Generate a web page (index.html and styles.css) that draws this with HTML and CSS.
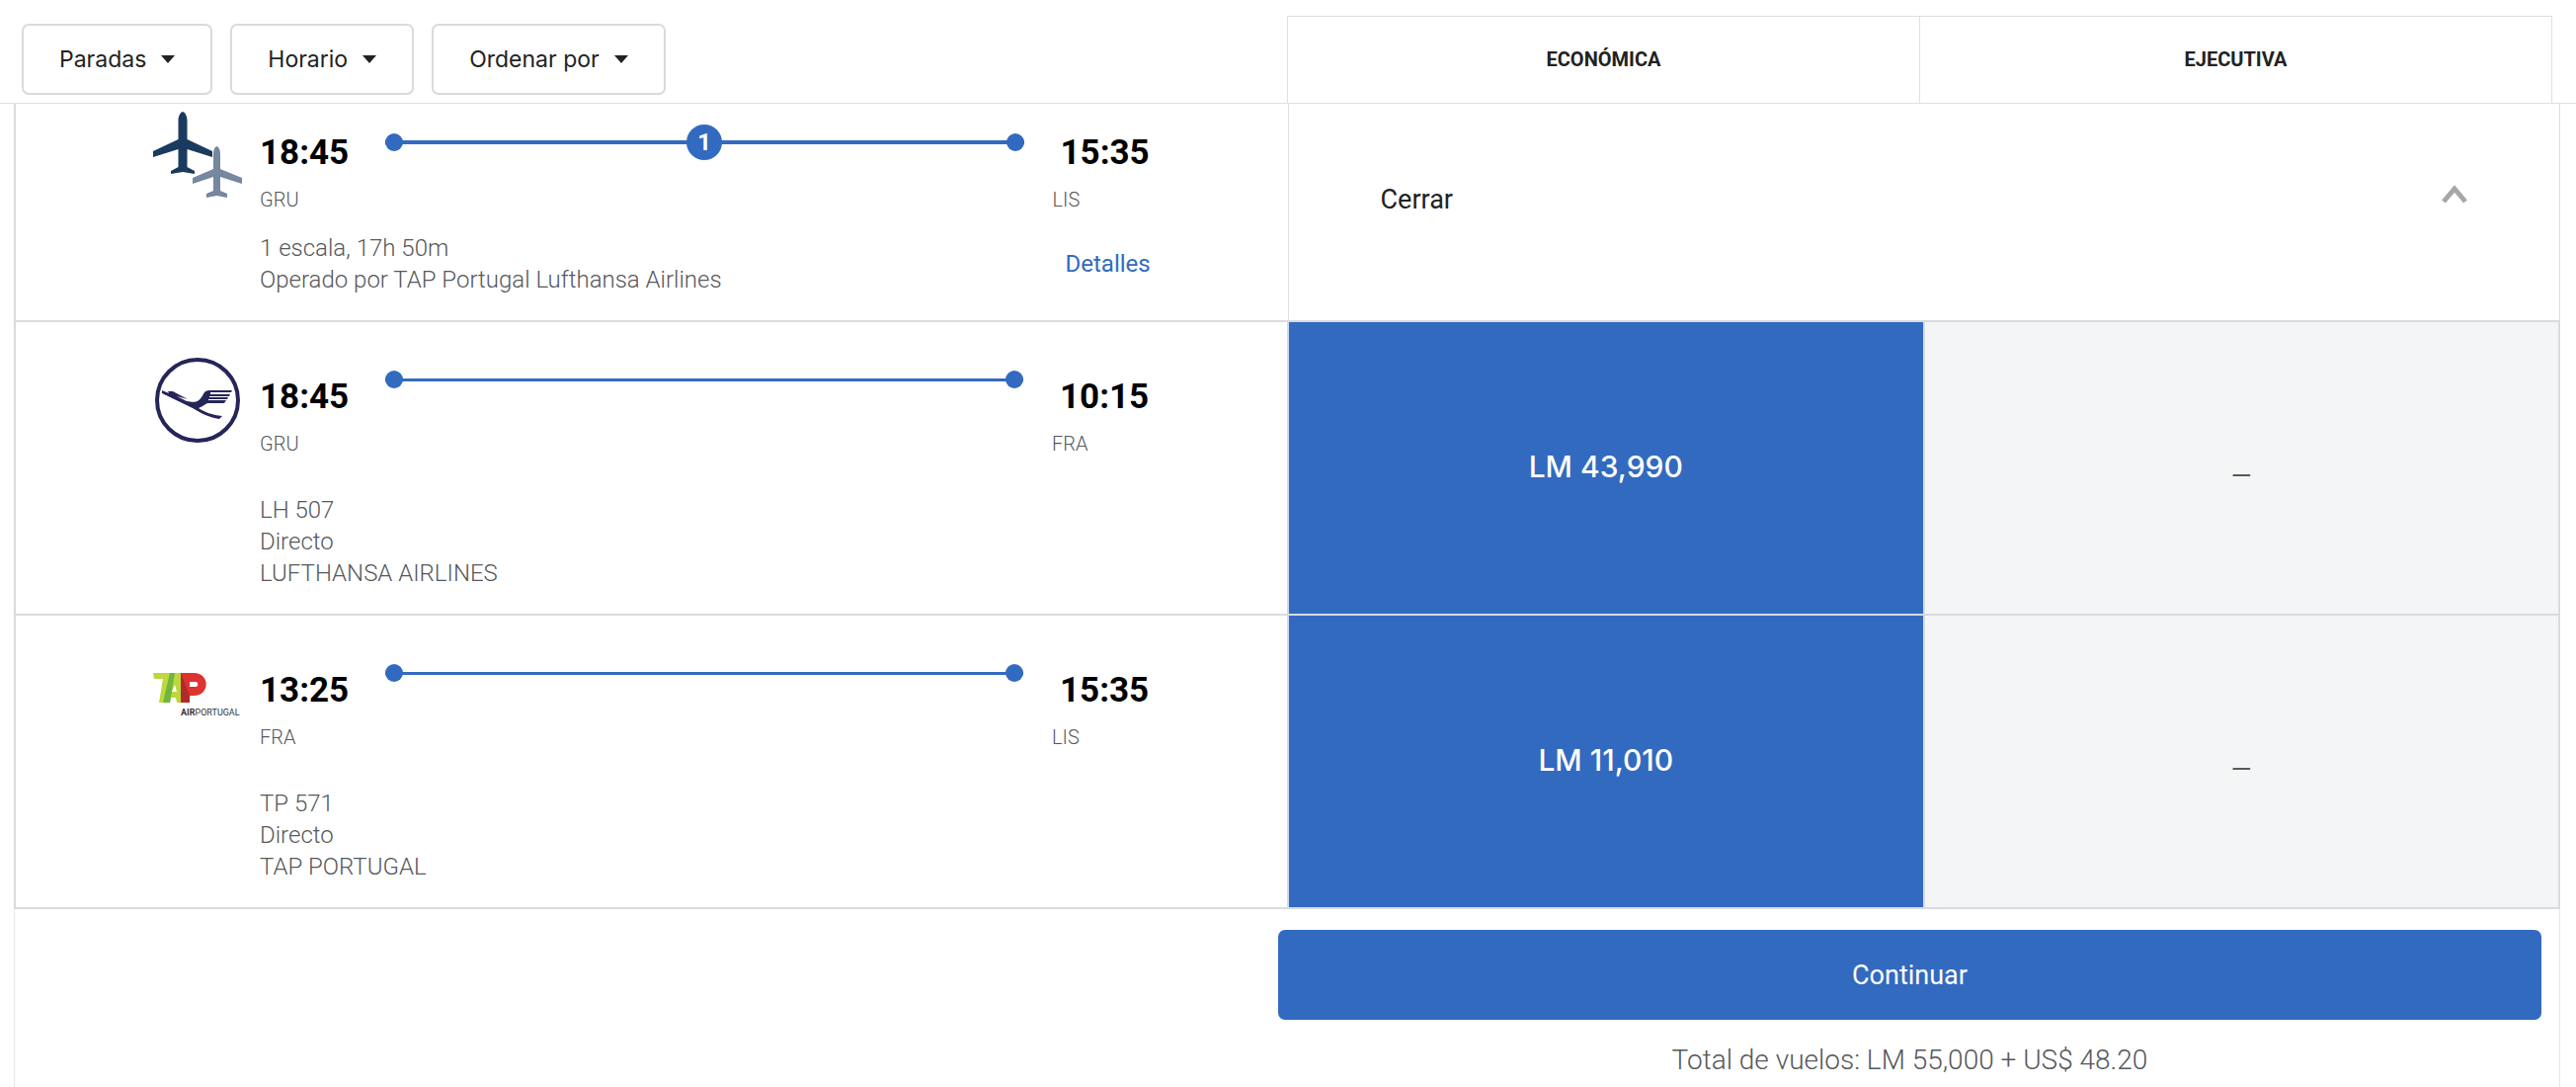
FILE: index.html
```html
<!DOCTYPE html>
<html lang="es">
<head>
    <meta charset="UTF-8">
    <title>Vuelos</title>
    <link rel="stylesheet" href="styles.css">
</head>
<body>
<header class="topbar">
    <div class="filters">
        <button type="button" class="filter">Paradas <span class="caret"></span></button>
        <button type="button" class="filter">Horario <span class="caret"></span></button>
        <button type="button" class="filter">Ordenar por <span class="caret"></span></button>
    </div>
    <div class="cabins">
        <div class="cabin">ECONÓMICA</div>
        <div class="cabin">EJECUTIVA</div>
    </div>
</header>

<main class="flights">
    <section class="flight flight-summary">
        <div class="flight-info">
            <svg class="logo" viewBox="0 0 90 90">
                <path fill="#1b3a5f" d="M30 0C33 1 34.500 5 34.500 9V28L60 40V46L34.500 38V56L42 60V63L30 61L18 63V60L25.500 56V38L0 46V40L25.500 28V9C25.500 5 27 1 30 0Z"/>
                <path fill="#76879f" d="M64.500 35C67 36 68 39 68 43V58L90 67V73L68 66V80L75 83V87L64.500 85L54 87V83L61 80V66L40 73V67L61 58V43C61 39 62 36 64.500 35Z"/>
            </svg>
            <div class="route">
                <div class="stop">
                    <div class="time">18:45</div>
                    <div class="airport">GRU</div>
                </div>
                <div class="line"><span class="stops">1</span></div>
                <div class="stop arrival">
                    <div class="time">15:35</div>
                    <div class="airport">LIS</div>
                </div>
                <div class="details">
                    1 escala, 17h 50m<br>
                    Operado por TAP Portugal Lufthansa Airlines
                </div>
                <a class="more" href="#">Detalles</a>
            </div>
        </div>
        <button type="button" class="close">
            Cerrar
            <svg class="chevron" viewBox="0 0 26 20"><path d="M2 17L13 4L24 17" fill="none" stroke="#a7a7a7" stroke-width="5"/></svg>
        </button>
    </section>

    <section class="flight">
        <div class="flight-info">
            <svg class="logo" viewBox="0 0 90 90">
                <circle cx="45" cy="45" r="41" fill="none" stroke="#262559" stroke-width="4"/>
                <path fill="#262559" d="M9 35L16 38L15 36L20 36L35 44L24 41L34 46C44 48 46 46 49 42L52 37C53 36 54 35 57 35H80L79 37L58 37V39H78L77 41L57 41V42H76L75 44L56 44V45H74L72 48L55 48C51 50 49 52 46 53C52 57 60 60 70 61L67 64C56 62 48 58 40 53L9 38Z"/>
            </svg>
            <div class="route">
                <div class="stop">
                    <div class="time">18:45</div>
                    <div class="airport">GRU</div>
                </div>
                <div class="line"></div>
                <div class="stop arrival">
                    <div class="time">10:15</div>
                    <div class="airport">FRA</div>
                </div>
                <div class="details">
                    LH 507<br>
                    Directo<br>
                    LUFTHANSA AIRLINES
                </div>
            </div>
        </div>
        <button type="button" class="fare fare-selected">LM 43,990</button>
        <div class="fare fare-empty">_</div>
    </section>

    <section class="flight">
        <div class="flight-info">
            <svg class="logo" viewBox="0 0 90 90">
                <path fill="#bdd73c" d="M0 24H28V54H24L23 49H18L17 54H6L10 30H1Z"/>
                <path fill="#6fb53f" d="M17 24H22L17 54H10Z"/>
                <path fill="#fff" d="M22 36L24 43H19Z"/>
                <path fill="#dc3430" d="M28 24H41C58 24 58 47 41 47H37V54H28Z"/>
                <path fill="#b02a27" d="M28 24L37 47V54H28Z"/>
                <path fill="#fff" d="M37 33H43C46 33 46 38 43 38H37Z"/>
                <text class="tap-text" x="28" y="67"><tspan class="tap-bold">AIR</tspan>PORTUGAL</text>
            </svg>
            <div class="route">
                <div class="stop">
                    <div class="time">13:25</div>
                    <div class="airport">FRA</div>
                </div>
                <div class="line"></div>
                <div class="stop arrival">
                    <div class="time">15:35</div>
                    <div class="airport">LIS</div>
                </div>
                <div class="details">
                    TP 571<br>
                    Directo<br>
                    TAP PORTUGAL
                </div>
            </div>
        </div>
        <button type="button" class="fare fare-selected">LM 11,010</button>
        <div class="fare fare-empty">_</div>
    </section>

    <div class="summary">
        <div class="summary-box">
            <button type="button" class="continue">Continuar</button>
            <p class="total">Total de vuelos: LM 55,000 + US$ 48.20</p>
        </div>
    </div>
</main>
</body>
</html>
```
FILE: styles.css
```css
* {
    box-sizing: border-box;
}
body {
    margin: 0;
    min-height: 100vh;
    display: flex;
    flex-direction: column;
    font-family: Roboto, "Liberation Sans", sans-serif;
    font-size: 24px;
    line-height: 32px;
    color: #56585b;
    background-color: #fff;
}
button {
    font: inherit;
    cursor: pointer;
}

/* filters and cabin names */
.topbar {
    display: flex;
    justify-content: space-between;
    height: 105px;
    padding: 16px 24px 0 22px;
    border-bottom: 1px solid #e0e0e0;
}
.filters {
    display: flex;
    gap: 18px;
    padding-top: 8px;
}
.filter {
    display: flex;
    align-items: center;
    gap: 15px;
    height: 72px;
    padding: 0 36px;
    border: 2px solid #dadada;
    border-radius: 7px;
    background-color: #fff;
    font-family: Inter, "Liberation Sans", sans-serif;
    font-size: 23px;
    color: #222;
}
.caret {
    border: 7px solid transparent;
    border-top: 8px solid #222;
    border-bottom: 0;
}
.cabins {
    display: flex;
    width: 50%;
}
.cabin {
    flex: 1;
    height: 88px;
    border: 1px solid #e0e0e0;
    border-bottom: 0;
    font-size: 20px;
    font-weight: bold;
    line-height: 86px;
    text-align: center;
    color: #222;
}
.cabin + .cabin {
    height: 90px;
    border-left: 0;
    border-bottom: 2px solid #e0e0e0;
}

/* flight rows */
.flights {
    flex: 1;
    display: flex;
    flex-direction: column;
    margin: 0 16px 0 14px;
}
.flight {
    display: grid;
    grid-template-columns: 2fr 1fr 1fr;
    min-height: 297px;
    border: 2px solid #dadbdc;
    border-top: 0;
}
.flight-info {
    display: flex;
    gap: 18px;
    padding: 34px 0 0 139px;
}
.logo {
    width: 90px;
    height: 90px;
}
.route {
    flex: 1;
    display: grid;
    grid-template-columns: 127px 1fr 267px;
    align-content: start;
}
.time {
    padding-top: 22px;
    font-size: 35px;
    font-weight: bold;
    line-height: 40px;
    color: #000;
}
.airport {
    padding-top: 11px;
    font-size: 20px;
}
.arrival {
    padding-left: 29px;
}
.arrival .time {
    padding-left: 8px;
}
.line {
    display: flex;
    align-items: center;
    justify-content: space-between;
    height: 18px;
    margin-top: 15px;
    background: linear-gradient(#326ac0, #326ac0) center / 100% 3px no-repeat;
}
.line::before,
.line::after {
    content: "";
    width: 18px;
    height: 18px;
    border-radius: 50%;
    background-color: #326ac0;
}
.stops {
    width: 36px;
    height: 36px;
    border-radius: 50%;
    background-color: #326ac0;
    color: #fff;
    font-weight: bold;
    line-height: 36px;
    text-align: center;
}
.details {
    grid-column: 1 / 3;
    padding-top: 35px;
}
.airport,
.details,
.total {
    font-weight: 300;
}
.more {
    padding-left: 42px;
    color: #326ac0;
    text-decoration: none;
}

.flight-summary {
    grid-template-columns: 1fr 1fr;
    min-height: 221px;
    border-right-width: 1px;
}
.flight-summary .flight-info {
    padding-top: 8px;
}
.flight-summary .line {
    margin-top: 22px;
    background-size: 100% 4px;
}
.flight-summary .details {
    padding-top: 17px;
}
.flight-summary .more {
    padding-top: 33px;
}
.close {
    display: flex;
    align-items: center;
    justify-content: space-between;
    padding: 0 93px 26px;
    border: 0;
    border-left: 1px solid #e0e0e0;
    background-color: #fff;
    font-size: 27px;
    color: #222;
}
.chevron {
    width: 26px;
    height: 20px;
    margin-bottom: 10px;
}

.fare {
    display: flex;
    align-items: center;
    justify-content: center;
    padding: 0 0 3px;
    border: 0;
    border-left: 2px solid #dadbdc;
    font-size: 30px;
}
.fare-selected {
    border-color: #cddaf0;
    background-color: #326ac0;
    color: #fff;
    font-family: Inter, "Liberation Sans", sans-serif;
    font-weight: 500;
}
.fare-empty {
    padding-bottom: 16px;
    background-color: #f3f5f7;
    font-family: "Liberation Sans", sans-serif;
}

.tap-text {
    font-size: 9px;
    fill: #333;
}
.tap-bold {
    font-weight: bold;
}

/* total and continue */
.summary {
    flex: 1;
    display: flex;
    justify-content: flex-end;
    padding: 21px 18px 0 0;
    border: 1px solid #e8e8e8;
    border-top: 0;
    border-bottom: 0;
}
.summary-box {
    width: 50%;
    text-align: center;
}
.continue {
    width: 100%;
    height: 91px;
    border: 0;
    border-radius: 7px;
    background-color: #326ac0;
    color: #fff;
    font-size: 27px;
}
.total {
    margin: 25px 0 0;
    font-size: 28px;
}
```
